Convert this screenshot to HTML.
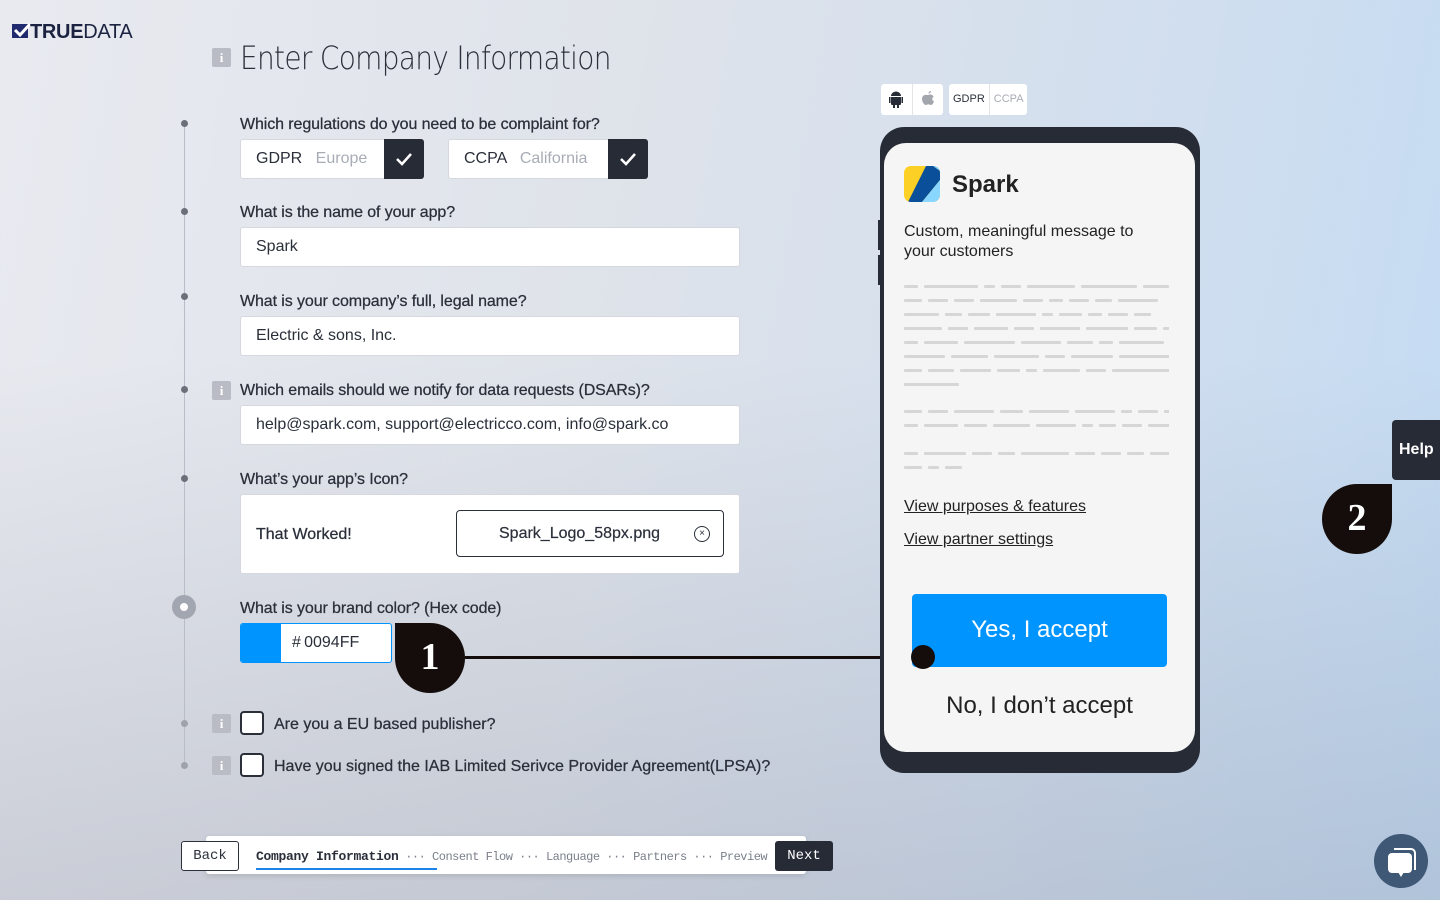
<!DOCTYPE html>
<html><head><meta charset="utf-8">
<style>
*{box-sizing:border-box;margin:0;padding:0}
body{width:1440px;height:900px;overflow:hidden;position:relative;font-family:"Liberation Sans",sans-serif;color:#2a2f3a;
background:linear-gradient(100deg,#e8eaf0 0%,#dfe3ea 40%,#d3dfee 70%,#c3dbf3 100%);}
.bgshade{position:absolute;left:0;top:0;width:1440px;height:900px;background:linear-gradient(180deg,rgba(0,0,0,0) 40%,rgba(120,125,145,0.25) 100%);}
.a{position:absolute}
.lbl{position:absolute;left:240px;font-size:16px;color:#2a2f3a;letter-spacing:-0.1px;-webkit-text-stroke:0.25px #2a2f3a}
.inp{position:absolute;left:240px;width:500px;height:40px;background:#fff;border:1px solid #d5d8de;border-radius:3px;font-size:16px;padding-left:15px;line-height:38px;color:#2a2f3a}
.info{position:absolute;width:19px;height:19px;background:#b9bcc4;border-radius:2px;color:#fff;font-size:13px;font-weight:bold;text-align:center;line-height:19px;font-family:"Liberation Serif",serif}
.dot{position:absolute;left:181px;width:7px;height:7px;border-radius:50%;background:#6a6f7a}
.cb{position:absolute;left:240px;width:24px;height:24px;border:2px solid #2a2f3a;border-radius:4px;background:#fff}
.ln{position:absolute;left:904px;display:flex;gap:6px;height:3px;width:265px;overflow:hidden}
.ln span{height:3px;background:#d6d6d6;border-radius:1px;flex:none}
</style></head><body>
<div class="bgshade"></div>

<!-- logo -->
<div class="a" style="left:12px;top:24px;width:16px;height:14px;background:#1f2b6e"></div>
<svg class="a" style="left:12px;top:22px" width="20" height="18"><path d="M3 8 L8 13 L18 2" stroke="#fff" stroke-width="3" fill="none"/></svg>
<div class="a" style="left:30px;top:21px;font-size:20px;color:#1c2340;letter-spacing:-0.3px"><b>TRUE</b>DATA</div>

<!-- title -->
<div class="info" style="left:212px;top:48px;">i</div>
<div class="a" style="left:240px;top:39px;font-size:32px;color:#2a2f3a;font-family:'DejaVu Sans',sans-serif;font-weight:300;letter-spacing:-0.8px;transform:scaleX(0.875);transform-origin:left;white-space:nowrap">Enter Company Information</div>

<!-- timeline -->
<div class="a" style="left:184px;top:126px;width:1px;height:640px;background:#b9bdc7"></div>
<div class="dot" style="top:120px"></div>
<div class="dot" style="top:208px"></div>
<div class="dot" style="top:293px"></div>
<div class="dot" style="top:386px"></div>
<div class="dot" style="top:475px"></div>
<div class="dot" style="top:720px;background:#9ea2ab"></div>
<div class="dot" style="top:762px;background:#9ea2ab"></div>
<div class="a" style="left:172px;top:595px;width:24px;height:24px;border-radius:50%;background:#a2a6b0"></div>
<div class="a" style="left:180px;top:603px;width:8px;height:8px;border-radius:50%;background:#fff"></div>

<div class="lbl" style="top:116px">Which regulations do you need to be complaint for?</div>
<div class="a" style="left:240px;top:139px;width:184px;height:40px;background:#fff;border:1px solid #d5d8de;border-radius:3px"></div>
<div class="a" style="left:256px;top:150px;font-size:16px">GDPR <span style="color:#a8acb5;margin-left:9px">Europe</span></div>
<div class="a" style="left:384px;top:139px;width:40px;height:40px;background:#262b36;border-radius:0 3px 3px 0"></div>
<svg class="a" style="left:394px;top:149px" width="20" height="20"><path d="M3 10 L8 15 L17 5" stroke="#fff" stroke-width="2.5" fill="none"/></svg>
<div class="a" style="left:448px;top:139px;width:200px;height:40px;background:#fff;border:1px solid #d5d8de;border-radius:3px"></div>
<div class="a" style="left:464px;top:150px;font-size:16px">CCPA <span style="color:#a8acb5;margin-left:9px">California</span></div>
<div class="a" style="left:608px;top:139px;width:40px;height:40px;background:#262b36;border-radius:0 3px 3px 0"></div>
<svg class="a" style="left:618px;top:149px" width="20" height="20"><path d="M3 10 L8 15 L17 5" stroke="#fff" stroke-width="2.5" fill="none"/></svg>

<div class="lbl" style="top:204px">What is the name of your app?</div>
<div class="inp" style="top:227px">Spark</div>
<div class="lbl" style="top:293px">What is your company’s full, legal name?</div>
<div class="inp" style="top:316px">Electric &amp; sons, Inc.</div>
<div class="info" style="left:212px;top:381px">i</div>
<div class="lbl" style="top:382px">Which emails should we notify for data requests (DSARs)?</div>
<div class="inp" style="top:405px">help@spark.com, support@electricco.com, info@spark.co</div>
<div class="lbl" style="top:471px">What’s your app’s Icon?</div>
<div class="a" style="left:240px;top:494px;width:500px;height:80px;background:#fff;border:1px solid #d5d8de;border-radius:3px"></div>
<div class="a" style="left:256px;top:526px;font-size:16px;-webkit-text-stroke:0.25px #2a2f3a">That Worked!</div>
<div class="a" style="left:456px;top:510px;width:268px;height:47px;border:1px solid #2a2f3a;border-radius:4px;background:#fff"></div>
<div class="a" style="left:499px;top:525px;font-size:16px;-webkit-text-stroke:0.2px #2a2f3a">Spark_Logo_58px.png</div>
<div class="a" style="left:694px;top:526px;width:16px;height:16px;border:1.3px solid #2a2f3a;border-radius:50%;font-size:10px;text-align:center;line-height:13px">×</div>

<div class="lbl" style="top:600px">What is your brand color? (Hex code)</div>
<div class="a" style="left:240px;top:623px;width:152px;height:40px;border:1px solid #0094ff;border-radius:3px;background:#fff;overflow:hidden">
 <div style="position:absolute;left:0;top:0;width:40px;height:40px;background:#0094ff"></div>
 <div style="position:absolute;left:51px;top:10px;font-size:16px">#&#8201;0094FF</div>
</div>

<!-- badge 1 -->
<div class="a" style="left:395px;top:623px;width:70px;height:70px;background:#140d0b;border-radius:0 50% 50% 50%"></div>
<div class="a" style="left:395px;top:635px;width:70px;text-align:center;color:#fff;font-family:'Liberation Serif',serif;font-weight:bold;font-size:38px">1</div>
<div class="a" style="left:465px;top:656px;width:458px;height:3px;background:#140d0b"></div>

<div class="info" style="left:212px;top:714px">i</div>
<div class="cb" style="top:711px"></div>
<div class="a" style="left:274px;top:716px;font-size:16px;-webkit-text-stroke:0.25px #2a2f3a">Are you a EU based publisher?</div>
<div class="info" style="left:212px;top:756px">i</div>
<div class="cb" style="top:753px"></div>
<div class="a" style="left:274px;top:758px;font-size:16px;-webkit-text-stroke:0.25px #2a2f3a">Have you signed the IAB Limited Serivce Provider Agreement(LPSA)?</div>

<!-- bottom nav -->
<div class="a" style="left:206px;top:836px;width:600px;height:38px;background:#fff;border-radius:3px;box-shadow:0 2px 6px rgba(0,0,0,0.12)"></div>
<div class="a" style="left:181px;top:841px;width:58px;height:30px;border:1px solid #2a2f3a;border-radius:3px;background:#fff;font-family:'Liberation Mono',monospace;font-size:14px;text-align:center;line-height:28px">Back</div>
<div class="a" style="left:256px;top:849px;font-family:'Liberation Mono',monospace;font-size:12px;letter-spacing:-0.5px;color:#7a7f8a;white-space:nowrap"><b style="color:#2a2f3a;font-size:13px;letter-spacing:-0.3px">Company Information</b> ··· Consent Flow ··· Language ··· Partners ··· Preview</div>
<div class="a" style="left:256px;top:868px;width:181px;height:2px;background:#1a82e8"></div>
<div class="a" style="left:775px;top:841px;width:58px;height:30px;background:#262b36;border-radius:3px;color:#fff;font-family:'Liberation Mono',monospace;font-size:14px;text-align:center;line-height:30px">Next</div>

<!-- platform tabs -->
<div class="a" style="left:881px;top:84px;width:62px;height:31px;background:#fff;border-radius:3px"></div>
<div class="a" style="left:912px;top:84px;width:1px;height:31px;background:#e3e4e8"></div>
<svg class="a" style="left:888px;top:90px" width="16" height="18" viewBox="0 0 16 18"><path d="M3 7h10v7a1 1 0 0 1-1 1H4a1 1 0 0 1-1-1z M3 6a5 4.5 0 0 1 10 0z M1 7h1.5v6H1z M13.5 7H15v6h-1.5z M5 15h2v3H5z M9 15h2v3H9z" fill="#262b36"/></svg>
<svg class="a" style="left:920px;top:90px" width="16" height="18" viewBox="0 0 16 18"><path d="M8 5c1-0.2 2-1 4 0 1 .6 1.5 1.4 1.6 1.8-2 1-1.6 4 .4 4.6-.5 1.6-1.6 3.6-3 3.6-1 0-1.3-.6-2.6-.6S6.7 15 5.8 15C4 15 2 11.5 2 9c0-3 2.5-4.5 4-4z M8.5 3.5C8.6 2 9.8 1 11 1c0 1.3-1 2.5-2.5 2.5z" fill="#a3a6ad"/></svg>
<div class="a" style="left:949px;top:84px;width:78px;height:31px;background:#fff;border-radius:3px;font-size:11px;line-height:31px"><span style="margin-left:4px;color:#2a2f3a">GDPR</span><span style="display:inline-block;width:1px;height:31px;background:#e3e4e8;vertical-align:top;margin:0 4px"></span><span style="color:#a8acb5">CCPA</span></div>

<!-- phone -->
<div class="a" style="left:880px;top:127px;width:320px;height:646px;background:#262b36;border-radius:24px"></div>
<div class="a" style="left:878px;top:220px;width:3px;height:30px;background:#262b36"></div>
<div class="a" style="left:878px;top:255px;width:3px;height:30px;background:#262b36"></div>
<div class="a" style="left:884px;top:143px;width:311px;height:609px;background:#f5f5f5;border-radius:22px"></div>
<svg class="a" style="left:904px;top:166px" width="36" height="36" viewBox="0 0 36 36">
<defs><clipPath id="c"><rect width="36" height="36" rx="7"/></clipPath></defs>
<g clip-path="url(#c)"><rect width="36" height="36" fill="#fdd026"/><path d="M22 0H36V14L18 36H4z" fill="#0a4f9a"/><path d="M36 14V36H18z M29 0h7v5z" fill="#89d7ff"/></g></svg>
<div class="a" style="left:952px;top:171px;font-size:24px;font-weight:bold;color:#222">Spark</div>
<div class="a" style="left:904px;top:222px;font-size:16px;line-height:20px;color:#222;width:260px">Custom, meaningful message to your customers</div>

<div class="ln" style="top:285px"><span style="width:14px"></span><span style="width:54px"></span><span style="width:11px"></span><span style="width:20px"></span><span style="width:48px"></span><span style="width:56px"></span><span style="width:26px"></span></div>
<div class="ln" style="top:299px"><span style="width:18px"></span><span style="width:20px"></span><span style="width:20px"></span><span style="width:37px"></span><span style="width:20px"></span><span style="width:14px"></span><span style="width:20px"></span><span style="width:17px"></span><span style="width:40px"></span></div>
<div class="ln" style="top:313px"><span style="width:35px"></span><span style="width:17px"></span><span style="width:22px"></span><span style="width:40px"></span><span style="width:11px"></span><span style="width:23px"></span><span style="width:14px"></span><span style="width:20px"></span><span style="width:17px"></span></div>
<div class="ln" style="top:327px"><span style="width:38px"></span><span style="width:20px"></span><span style="width:34px"></span><span style="width:20px"></span><span style="width:40px"></span><span style="width:42px"></span><span style="width:23px"></span><span style="width:25px"></span></div>
<div class="ln" style="top:341px"><span style="width:14px"></span><span style="width:34px"></span><span style="width:51px"></span><span style="width:40px"></span><span style="width:26px"></span><span style="width:14px"></span><span style="width:45px"></span><span style="width:20px"></span></div>
<div class="ln" style="top:355px"><span style="width:41px"></span><span style="width:37px"></span><span style="width:45px"></span><span style="width:20px"></span><span style="width:42px"></span><span style="width:65px"></span></div>
<div class="ln" style="top:369px"><span style="width:18px"></span><span style="width:26px"></span><span style="width:31px"></span><span style="width:23px"></span><span style="width:11px"></span><span style="width:37px"></span><span style="width:20px"></span><span style="width:62px"></span></div>
<div class="ln" style="top:383px"><span style="width:55px"></span></div>
<div class="ln" style="top:410px"><span style="width:18px"></span><span style="width:20px"></span><span style="width:40px"></span><span style="width:23px"></span><span style="width:40px"></span><span style="width:40px"></span><span style="width:11px"></span><span style="width:20px"></span><span style="width:20px"></span></div>
<div class="ln" style="top:424px"><span style="width:14px"></span><span style="width:34px"></span><span style="width:23px"></span><span style="width:37px"></span><span style="width:40px"></span><span style="width:11px"></span><span style="width:17px"></span><span style="width:20px"></span><span style="width:42px"></span></div>
<div class="ln" style="top:452px"><span style="width:14px"></span><span style="width:42px"></span><span style="width:20px"></span><span style="width:17px"></span><span style="width:48px"></span><span style="width:20px"></span><span style="width:20px"></span><span style="width:17px"></span><span style="width:23px"></span><span style="width:17px"></span></div>
<div class="ln" style="top:466px"><span style="width:18px"></span><span style="width:11px"></span><span style="width:17px"></span></div>

<div class="a" style="left:904px;top:498px;font-size:16px;color:#222;text-decoration:underline">View purposes &amp; features</div>
<div class="a" style="left:904px;top:531px;font-size:16px;color:#222;text-decoration:underline">View partner settings</div>
<div class="a" style="left:912px;top:594px;width:255px;height:73px;background:#0094ff;border-radius:4px;color:#fff;font-size:24px;text-align:center;line-height:72px">Yes, I accept</div>
<div class="a" style="left:911px;top:645px;width:24px;height:24px;border-radius:50%;background:#140d0b"></div>
<div class="a" style="left:884px;top:692px;width:311px;text-align:center;font-size:24px;color:#222">No, I don’t accept</div>

<!-- help -->
<div class="a" style="left:1392px;top:420px;width:60px;height:60px;background:#262b36;border-radius:4px 0 0 4px;color:#fff;font-size:16px;font-weight:bold;line-height:60px;padding-left:7px">Help</div>
<div class="a" style="left:1322px;top:484px;width:70px;height:70px;background:#140d0b;border-radius:50% 0 50% 50%"></div>
<div class="a" style="left:1322px;top:496px;width:70px;text-align:center;color:#fff;font-family:'Liberation Serif',serif;font-weight:bold;font-size:38px">2</div>

<!-- chat -->
<div class="a" style="left:1374px;top:834px;width:54px;height:54px;border-radius:50%;background:#3f5875"></div>
<svg class="a" style="left:1374px;top:834px" width="54" height="54" viewBox="0 0 54 54"><path d="M20 15h17a4 4 0 0 1 4 4v17" stroke="#fff" stroke-width="2" fill="none"/><rect x="14" y="19" width="24" height="20" rx="4" fill="#fff"/><path d="M24 38l3 5 3-5z" fill="#fff"/></svg>
</body></html>
